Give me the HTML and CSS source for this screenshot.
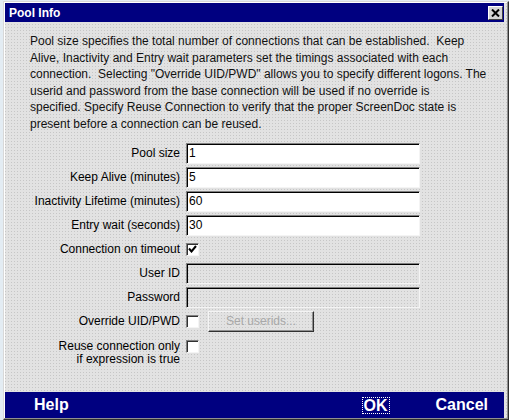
FILE: index.html
```html
<!DOCTYPE html>
<html lang="en">
<head>
  <meta charset="UTF-8" />
  <title>Pool Info</title>
  <link rel="stylesheet" href="styles.css">
</head>
<body>
  <div class="window">
    <div class="titlebar">
      <span class="title">Pool Info</span>
      <span class="close">
        <svg width="9" height="8" viewBox="0 0 9 8"><path d="M1 0.5 L8 7.5 M8 0.5 L1 7.5" stroke="#000" stroke-width="2"/></svg>
      </span>
    </div>

    <div class="content">
      <p class="intro">
        Pool size specifies the total number of connections that can be established.&nbsp; Keep<br>
        Alive, Inactivity and Entry wait parameters set the timings associated with each<br>
        connection.&nbsp; Selecting "Override UID/PWD" allows you to specify different logons. The<br>
        userid and password from the base connection will be used if no override is<br>
        specified. Specify Reuse Connection to verify that the proper ScreenDoc state is<br>
        present before a connection can be reused.
      </p>

      <div class="form">
        <label class="label">Pool size</label>
        <div class="field"><input class="text" type="text" value="1"></div>

        <label class="label">Keep Alive (minutes)</label>
        <div class="field"><input class="text" type="text" value="5"></div>

        <label class="label">Inactivity Lifetime (minutes)</label>
        <div class="field"><input class="text" type="text" value="60"></div>

        <label class="label">Entry wait (seconds)</label>
        <div class="field"><input class="text" type="text" value="30"></div>

        <label class="label">Connection on timeout</label>
        <div class="field">
          <span class="check">
            <svg width="9" height="8" viewBox="0 0 9 8"><path d="M1 3.5 L3.5 6.5 L8 1" fill="none" stroke="#000" stroke-width="2"/></svg>
          </span>
        </div>

        <label class="label">User ID</label>
        <div class="field"><input class="text disabled" type="text" disabled></div>

        <label class="label">Password</label>
        <div class="field"><input class="text disabled" type="password" disabled></div>

        <label class="label">Override UID/PWD</label>
        <div class="field">
          <span class="check"></span>
          <button class="btn" disabled>Set userids...</button>
        </div>

        <label class="label two-line">Reuse connection only<br>if expression is true</label>
        <div class="field top"><span class="check"></span></div>
      </div>
    </div>

    <div class="buttons">
      <span class="help">Help</span>
      <span class="ok">OK</span>
      <span class="cancel">Cancel</span>
    </div>
  </div>
</body>
</html>
```

FILE: styles.css
```css
body {
  margin: 0;
  background: #e3ecf3;
  font-family: 'Liberation Sans', Arial, sans-serif;
  font-size: 12px;
  color: #000;
}

.window {
  box-sizing: border-box;
  width: 506px;
  height: 419px;
  margin: 1px 0 0 3px;
  padding: 1px 4px 1px 1px;
  display: flex;
  flex-direction: column;
  background-color: #e2e2e2;
  background-image: radial-gradient(#c6c6c6 0.7px, transparent 0.8px);
  background-size: 3px 3px;
  border: 1px solid;
  border-color: #d8d8d8 #303030 #303030 #d8d8d8;
  box-shadow: inset -1px -1px 0 #909090, inset 1px 1px 0 #ffffff;
}

.titlebar {
  height: 19px;
  background: #000080;
  display: flex;
  align-items: center;
  justify-content: space-between;
  padding: 0 1px 0 4px;
}

.title {
  color: #fff;
  font-weight: bold;
  font-size: 12px;
}

.close {
  box-sizing: border-box;
  width: 15px;
  height: 14px;
  background: #d4d4d4;
  border: 1px solid;
  border-color: #fff #404040 #404040 #fff;
  display: flex;
  align-items: center;
  justify-content: center;
}

.content {
  flex: 1;
}

.intro {
  margin: 11px 8px 0 25px;
  line-height: 16.6px;
  white-space: nowrap;
  color: #111;
}

.form {
  display: grid;
  grid-template-columns: 175px 234px;
  column-gap: 6px;
  row-gap: 3px;
  margin-top: 10px;
}

.label {
  text-align: right;
  align-self: center;
  white-space: nowrap;
}

.label.two-line {
  align-self: start;
  line-height: 13px;
  margin-top: 5px;
}

.field {
  height: 21px;
  display: flex;
  align-items: center;
  gap: 9px;
}

.field.top {
  align-items: flex-start;
  margin-top: 5px;
}

.text {
  box-sizing: border-box;
  width: 234px;
  height: 21px;
  margin: 0;
  padding: 0 2px;
  font: 12px 'Liberation Sans', Arial, sans-serif;
  color: #000;
  background: #fff;
  border: 1px solid;
  border-color: #808080 #f4f4f4 #f4f4f4 #808080;
  box-shadow: inset 1px 1px 0 #000;
  outline: none;
}

.text.disabled {
  background: transparent;
}

.check {
  box-sizing: border-box;
  width: 13px;
  height: 13px;
  background: #fff;
  border: 1px solid;
  border-color: #808080 #f4f4f4 #f4f4f4 #808080;
  box-shadow: inset 1px 1px 0 #303030;
  display: flex;
  align-items: center;
  justify-content: center;
}

.btn {
  box-sizing: border-box;
  width: 106px;
  height: 21px;
  padding: 0;
  font: 12px 'Liberation Sans', Arial, sans-serif;
  color: #a8a8a8;
  background: transparent;
  border: 1px solid;
  border-color: #f4f4f4 #303030 #303030 #f4f4f4;
  box-shadow: inset -1px -1px 0 #909090;
}

.buttons {
  height: 26px;
  background: #000080;
  display: flex;
  align-items: center;
  padding: 0 16px 0 29px;
  color: #fff;
  font-weight: bold;
  font-size: 16px;
}

.help {
  flex: 1;
}

.ok {
  outline: 1px dotted #fff;
  outline-offset: 0;
  padding: 0 1px;
  line-height: 15px;
  margin-right: 47px;
}
```
